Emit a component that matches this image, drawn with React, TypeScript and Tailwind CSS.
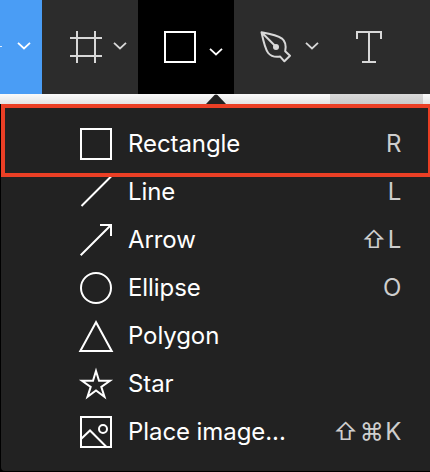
import type { ReactNode } from "react";

function Chevron({ className = "" }: { className?: string }) {
  return (
    <svg className={className} width="14" height="8" viewBox="0 0 14 8" fill="none" stroke="currentColor" strokeWidth="1.8">
      <path d="M1 .8 7 6.5 13 .8" />
    </svg>
  );
}

function Icon({ children, color = "text-white" }: { children: ReactNode; color?: string }) {
  return (
    <svg className={`shrink-0 overflow-visible ${color}`} width="32" height="32" viewBox="0 0 32 32" fill="none" stroke="currentColor" strokeWidth="2" strokeMiterlimit="10">
      {children}
    </svg>
  );
}

const items = [
  { label: "Rectangle", keys: "R", icon: <path d="M1 1h30v30H1z" /> },
  { label: "Line", keys: "L", icon: <path d="M1.5 30 32 -.5" /> },
  { label: "Arrow", keys: "⇧L", icon: <path d="M.7 31.3 31 1M20 1h11v11" /> },
  { label: "Ellipse", keys: "O", icon: <circle cx="16" cy="16" r="15" /> },
  { label: "Polygon", keys: "", icon: <path d="M16 2.2.3 31h31.4z" /> },
  {
    label: "Star",
    keys: "",
    icon: <path d="m16 3 3 9.7h11l-8.7 6.2 3.2 10-8.5-6.4-8.5 6.4 3.2-10L2 12.7h11z" />,
  },
  {
    label: "Place image...",
    keys: "⇧⌘K",
    icon: (
      <>
        <path d="M1 1h30v30H1zM1 23l9-8.5L26.5 31" />
        <circle cx="23" cy="13" r="4" />
      </>
    ),
  },
];

export default function App() {
  return (
    <div className="relative flex h-[472px] w-[430px] flex-col overflow-hidden bg-black font-['Inter',sans-serif]">
      <header className="flex h-[94px] shrink-0 bg-[#2c2c2c] text-[#d8d8d8]">
        <div className="relative flex w-[42px] items-center bg-[#4a9df5] pl-[17px] text-white">
          <span className="absolute left-0 top-[46px] h-px w-[2px] bg-white/80" />
          <Chevron className="mt-[-2px]" />
        </div>
        <div className="flex w-24 items-center pl-7">
          <Icon color="text-[#d8d8d8]">
            <path d="M7 0v32M25 0v32M0 7h32M0 25h32" />
          </Icon>
          <Chevron className="ml-[11px] mt-[-2px]" />
        </div>
        <div className="flex w-24 items-center bg-black pl-[26px] text-white">
          <Icon>
            <path d="M1 1h30v30H1z" />
          </Icon>
          <Chevron className="ml-[13px] mt-[10px]" />
        </div>
        <div className="flex w-24 items-center pl-[26px]">
          <Icon color="text-[#d8d8d8]">
            <path d="M1.5 1.3C12 3.2 18 4.6 22 7.6c4.2 3.5 4.2 8 3.2 12.6L30 24.8l-5.6 5.5-4.2-4.7C14 26.5 11 25.5 8.2 22 5 18 3.5 11 1.5 1.3ZM1.5 1.3 16 15.8" strokeLinejoin="round" />
            <circle cx="16" cy="16" r="3" fill="currentColor" stroke="none" />
          </Icon>
          <Chevron className="ml-[13px] mt-[-2px]" />
        </div>
        <div className="flex flex-1 items-center pl-[23px]">
          <Icon color="text-[#d8d8d8]">
            <path d="M4 8V1h24v7M16 1v30M9 31h14" />
          </Icon>
        </div>
      </header>
      <div className="flex h-[10px] shrink-0 bg-linear-to-b from-[#fafafa] to-[#e4e4e4] pl-[330px]">
        <div className="w-[93px] bg-linear-to-b from-[#dadada] to-[#cacaca]" />
      </div>
      <svg className="absolute left-[206px] top-[94px]" width="20" height="11" viewBox="0 0 20 11">
        <path d="M0 11v-1L8.5 1q1.5-1.2 3 0l8.5 9v1z" fill="#222" />
      </svg>
      <ul className="ml-px h-[367px] rounded-bl-sm bg-[#222] pt-4">
        {items.map((item) => (
          <li key={item.label} className="flex h-12 items-center pl-[79px] pr-[27px] text-2xl text-white">
            <Icon>{item.icon}</Icon>
            <span className="ml-4 tracking-[-0.08px]">{item.label}</span>
            <span className="ml-auto tracking-[1.6px] text-[#cecece]">{item.keys}</span>
          </li>
        ))}
      </ul>
      <div className="absolute left-px top-[104px] h-[73px] w-[431px] border-4 border-[#eb3f25]" />
    </div>
  );
}
